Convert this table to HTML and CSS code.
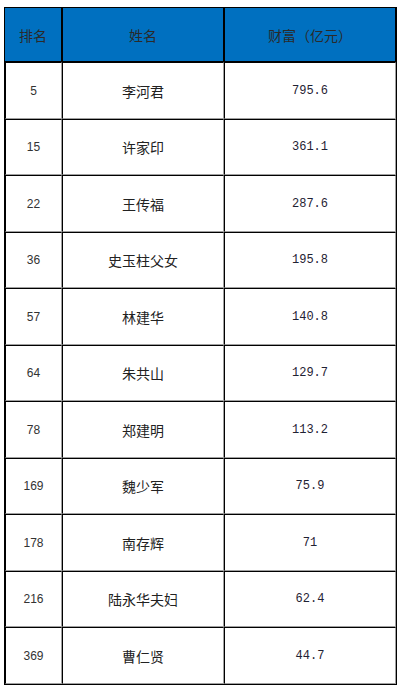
FILE: index.html
```html
<!DOCTYPE html>
<html lang="zh-CN">
<head>
<meta charset="utf-8">
<link rel="stylesheet" href="styles.css">
</head>
<body>
<table class="rich">
  <colgroup>
    <col class="c-rank">
    <col class="c-name">
    <col class="c-val">
  </colgroup>
  <thead>
    <tr class="head">
      <th>排名</th><th>姓名</th><th>财富（亿元）</th>
    </tr>
  </thead>
  <tbody>
    <tr><td class="rank">5</td><td class="name">李河君</td><td class="val">795.6</td></tr>
    <tr><td class="rank">15</td><td class="name">许家印</td><td class="val">361.1</td></tr>
    <tr><td class="rank">22</td><td class="name">王传福</td><td class="val">287.6</td></tr>
    <tr><td class="rank">36</td><td class="name">史玉柱父女</td><td class="val">195.8</td></tr>
    <tr><td class="rank">57</td><td class="name">林建华</td><td class="val">140.8</td></tr>
    <tr><td class="rank">64</td><td class="name">朱共山</td><td class="val">129.7</td></tr>
    <tr><td class="rank">78</td><td class="name">郑建明</td><td class="val">113.2</td></tr>
    <tr><td class="rank">169</td><td class="name">魏少军</td><td class="val">75.9</td></tr>
    <tr><td class="rank">178</td><td class="name">南存辉</td><td class="val">71</td></tr>
    <tr><td class="rank">216</td><td class="name">陆永华夫妇</td><td class="val">62.4</td></tr>
    <tr><td class="rank">369</td><td class="name">曹仁贤</td><td class="val">44.7</td></tr>
  </tbody>
</table>
</body>
</html>
```
FILE: styles.css
```css
html, body {
  margin: 0;
  background: #ffffff;
}
body {
  padding: 7px 4px;
  font-family: "Noto Sans CJK SC", "Liberation Sans", sans-serif;
  color: #222;
}
.rich {
  border-collapse: separate;
  border-spacing: 0;
  border: 1px solid #000;
  table-layout: fixed;
  width: 393px;
}
.c-rank { width: 57px; }
.c-name { width: 162px; }
.c-val { width: 172px; }
.rich th,
.rich td {
  box-sizing: border-box;
  padding: 0;
  text-align: center;
  vertical-align: middle;
  border-top: 1px solid #000;
  border-left: 1px solid #000;
  border-right: 1px solid #a0a0a0;
  border-bottom: 1px solid #a0a0a0;
}
.rich th {
  background: #0070c0;
  font-weight: normal;
  font-size: 14px;
  color: #2a2a2a;
  border-right-color: #000;
  border-bottom-color: #000;
  border-top: 0;
  border-left: 0;
}
.rich th + th {
  border-left: 1px solid #000;
}
.head { height: 54px; }
.rich tbody tr { height: 56px; }
.rich tbody tr:nth-child(odd) { height: 57px; }
.rank {
  font-family: "Liberation Sans", Arial, sans-serif;
  font-size: 12px;
  color: #333;
}
.name {
  font-size: 14px;
  color: #222;
}
.val {
  font-family: "Liberation Mono", "Courier New", monospace;
  font-size: 12px;
  color: #1f2233;
}
```
